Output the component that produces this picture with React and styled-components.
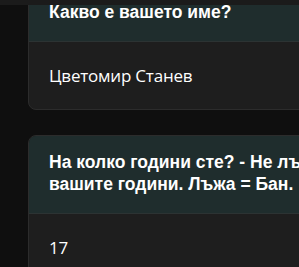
import React from "react";
import styled, { createGlobalStyle } from "styled-components";

const Global = createGlobalStyle`
  html, body { margin: 0; padding: 0; background: #0f0f0f; overflow: hidden; }
  body { width: 299px; height: 267px; }
`;

const TopBar = styled.div`
  position: fixed;
  top: 0;
  left: 0;
  right: 0;
  height: 5px;
  background: #1b1b1b;
  z-index: 10;
`;

const Page = styled.div`
  display: flex;
  flex-direction: column;
  gap: 25px;
  padding-left: 28px;
  margin-top: -15px;
  width: 417px;
`;

const Card = styled.section`
  background: #1e1e1e;
  border: 1px solid #2c2c2c;
  border-radius: 8px;
  overflow: hidden;
`;

const Header = styled.div`
  background: #1f2d2d;
  border-bottom: 1px solid #2c3333;
  padding: 15px 20px 17px;
`;

const Question = styled.h3`
  margin: 0;
  font-family: "Liberation Sans", Arial, sans-serif;
  font-weight: 700;
  font-size: 17.5px;
  line-height: 22.5px;
  color: #ffffff;
`;

const Body = styled.div`
  padding: 20px 20px;
`;

const Answer = styled.p`
  margin: 0;
  font-family: "Open Sans", sans-serif;
  font-size: 17px;
  line-height: 27px;
  letter-spacing: -0.2px;
  color: #ffffff;
`;

const items = [
  { q: "Какво е вашето име?", a: "Цветомир Станев" },
  { q: "На колко години сте? - Не лъжете за вашите години. Лъжа = Бан.", a: "17" },
];

export default function App() {
  return (
    <>
      <Global />
      <TopBar />
      <Page>
        {items.map((it, i) => (
          <Card key={i}>
            <Header>
              <Question>{it.q}</Question>
            </Header>
            <Body>
              <Answer>{it.a}</Answer>
            </Body>
          </Card>
        ))}
      </Page>
    </>
  );
}
